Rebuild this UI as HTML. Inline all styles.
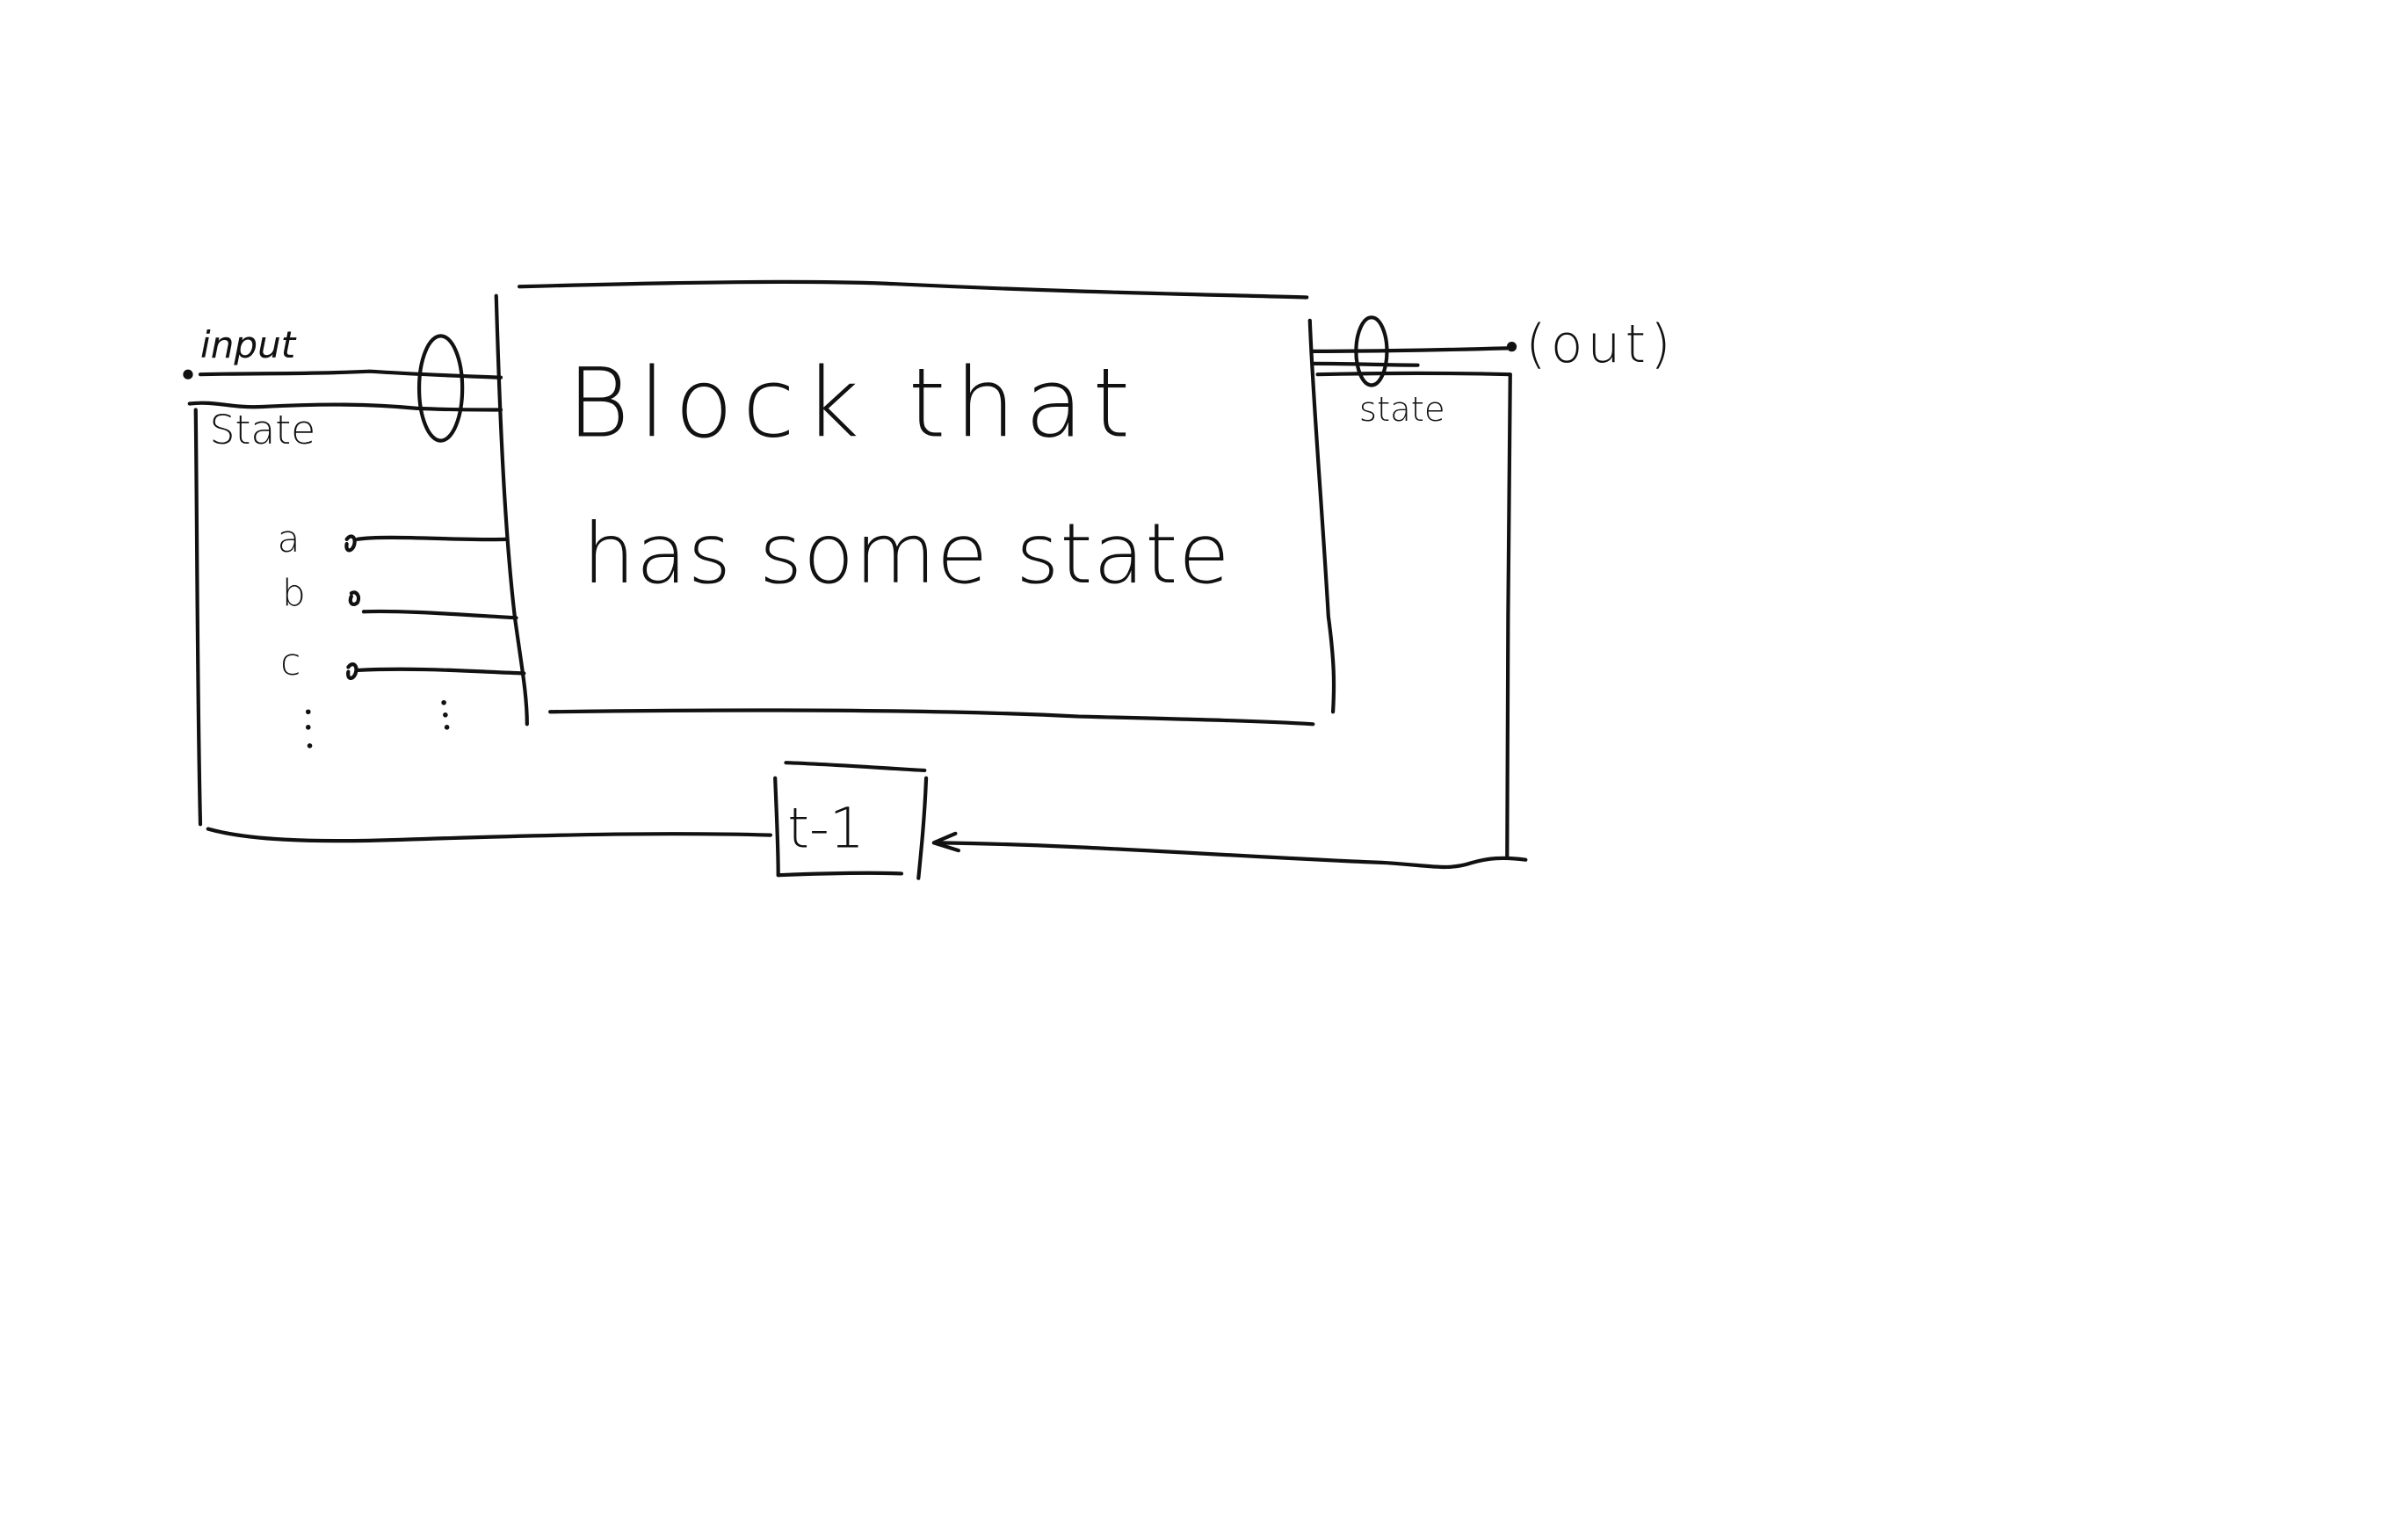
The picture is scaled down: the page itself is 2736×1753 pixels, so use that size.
<!DOCTYPE html>
<html><head><meta charset="utf-8"><style>
html,body{margin:0;padding:0;background:#fff;width:2736px;height:1753px;overflow:hidden}
svg{display:block}
text{font-family:"DejaVu Sans","Liberation Sans",sans-serif;fill:#111;font-weight:300}
</style></head><body>
<svg width="2736" height="1753" viewBox="0 0 1560 999.5" preserveAspectRatio="none">
<g fill="none" stroke="#111" stroke-width="2.4" stroke-linecap="round" stroke-linejoin="round">
<path d="M337 186 C450 183 520 182 575 184 C700 190 780 191 848 193"/>
<path d="M322 192 C324 260 327 340 334 400 C338 430 342 450 342 470"/>
<path d="M357 462 C500 460 620 461 700 465 C780 467 820 468 852 470"/>
<path d="M850 208 C852 260 858 330 862 400 C866 430 866 445 865 462"/>
<path d="M130 243 C170 242 200 243 240 241 C270 243 300 244 325 245"/>
<path d="M123 262 C140 260 150 265 170 264 C210 262 240 262 270 265 C290 266 310 266 325 266"/>
<circle cx="122" cy="243" r="2" fill="#111"/>
<ellipse cx="286" cy="252" rx="14" ry="34"/>
<path d="M127 266 C128 350 128 450 130 535"/>
<path d="M135 538 C160 545 200 547 260 545 C350 542 430 540 500 542"/>
<path d="M232 350 C250 347 300 351 328 350"/>
<path d="M236 397 C260 396 300 399 335 401"/>
<path d="M232 435 C270 433 310 436 340 437"/>
<path d="M225 350 c3 -4 6 -1 5 3 c-1 5 -6 6 -5 0"/>
<path d="M228 385 c3 -2 6 2 4 6 c-3 3 -6 0 -4 -4"/>
<path d="M226 433 c3 -4 6 -1 5 3 c-1 5 -6 6 -5 0"/>
<path d="M510 495 C540 496 580 499 600 500"/>
<path d="M503 505 C504 530 505 550 505 568"/>
<path d="M505 568 C530 567 560 566 585 567"/>
<path d="M601 505 C600 530 598 550 596 570"/>
<path d="M608 547 C700 548 800 556 900 560 C930 562 940 565 955 560 C965 557 975 556 990 558"/>
<path d="M620 541 L606 547 L622 552"/>
<path d="M852 228 C900 228 940 227 978 226"/>
<path d="M855 243 C900 242 940 242 980 243"/>
<path d="M853 236 C880 236 900 237 920 237"/>
<ellipse cx="890" cy="228" rx="10" ry="22"/>
<path d="M980 243 C979 350 978 450 978 557"/>
<circle cx="981" cy="225" r="2" fill="#111"/>
</g>
<g fill="#111">
<circle cx="200" cy="462" r="1.6"/><circle cx="200" cy="472" r="1.6"/><circle cx="201" cy="484" r="1.6"/>
<circle cx="288" cy="456" r="1.6"/><circle cx="289" cy="464" r="1.6"/><circle cx="290" cy="472" r="1.6"/>
</g>
<text x="130" y="232" font-size="24" font-style="italic">input</text>
<text x="136" y="288" font-size="26">State</text>
<text x="180" y="358" font-size="24">a</text>
<text x="183" y="393" font-size="24">b</text>
<text x="182" y="438" font-size="24">c</text>
<text x="368" y="283" font-size="62" letter-spacing="6">Block  that</text>
<text x="378" y="378" font-size="54" letter-spacing="0.5">has some state</text>
<text x="511" y="550" font-size="36">t-1</text>
<text x="990" y="235" font-size="34" letter-spacing="3">(out)</text>
<text x="882" y="273" font-size="22">state</text>
</svg>
</body></html>
